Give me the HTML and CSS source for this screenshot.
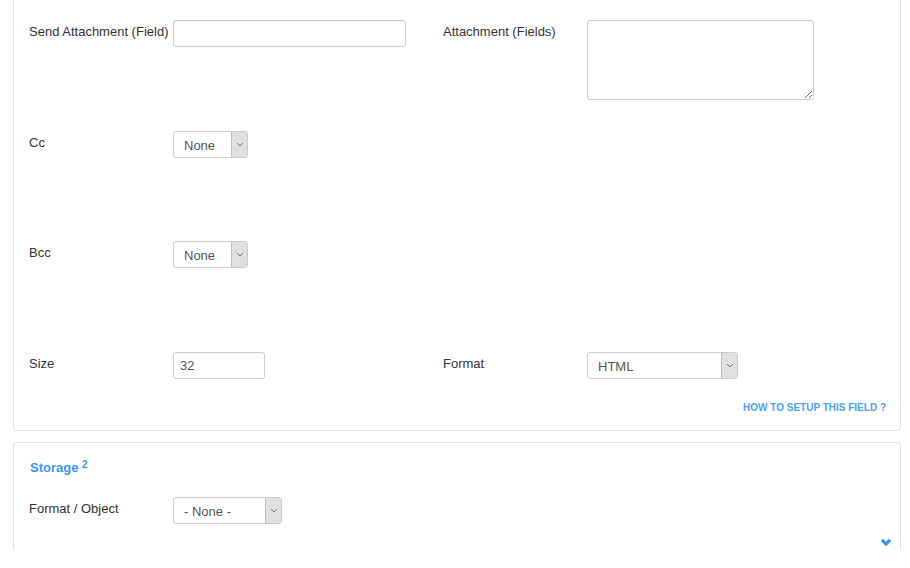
FILE: index.html
```html
<!DOCTYPE html>
<html lang="en">
<head>
    <meta charset="UTF-8">
    <meta name="viewport" content="width=device-width, initial-scale=1.0">
    <title>Field settings</title>
    <link rel="stylesheet" href="styles.css">
</head>
<body>
    <div class="page">
        <!-- options panel (top is scrolled out of view) -->
        <div class="panel panel-options">
            <div class="row">
                <div class="field">
                    <label class="label">Send Attachment (Field)</label>
                    <input class="input input-wide" type="text" value="">
                </div>
                <div class="field">
                    <label class="label">Attachment (Fields)</label>
                    <textarea class="textarea"></textarea>
                </div>
            </div>
            <div class="row">
                <div class="field">
                    <label class="label">Cc</label>
                    <div class="select select-small">
                        <span class="select-value">None</span>
                        <span class="select-arrow"><svg width="8" height="5" viewBox="0 0 8 5"><polyline points="1,1 4,4 7,1" fill="none" stroke="#777" stroke-width="1"/></svg></span>
                    </div>
                </div>
            </div>
            <div class="row">
                <div class="field">
                    <label class="label">Bcc</label>
                    <div class="select select-small">
                        <span class="select-value">None</span>
                        <span class="select-arrow"><svg width="8" height="5" viewBox="0 0 8 5"><polyline points="1,1 4,4 7,1" fill="none" stroke="#777" stroke-width="1"/></svg></span>
                    </div>
                </div>
            </div>
            <div class="row row-last">
                <div class="field">
                    <label class="label">Size</label>
                    <input class="input input-size" type="text" value="32">
                </div>
                <div class="field">
                    <label class="label">Format</label>
                    <div class="select select-format">
                        <span class="select-value">HTML</span>
                        <span class="select-arrow"><svg width="8" height="5" viewBox="0 0 8 5"><polyline points="1,1 4,4 7,1" fill="none" stroke="#777" stroke-width="1"/></svg></span>
                    </div>
                </div>
            </div>
            <div class="help-link"><a href="#">How to setup this field ?</a></div>
        </div>

        <!-- storage panel -->
        <div class="panel panel-storage">
            <h3 class="panel-title">Storage <sup>2</sup></h3>
            <div class="field">
                <label class="label">Format / Object</label>
                <div class="select select-object">
                    <span class="select-value">- None -</span>
                    <span class="select-arrow"><svg width="8" height="5" viewBox="0 0 8 5"><polyline points="1,1 4,4 7,1" fill="none" stroke="#777" stroke-width="1"/></svg></span>
                </div>
            </div>
            <div class="toggle">
                <svg width="12" height="9" viewBox="0 0 12 9"><polyline points="1.8,1.8 6,6 10.2,1.8" fill="none" stroke="#3d94f6" stroke-width="3.2" stroke-linejoin="miter"/></svg>
            </div>
        </div>
    </div>
</body>
</html>
```

FILE: styles.css
```css
body {
    margin: 0;
    background-color: #fff;
    font-family: "Liberation Sans", Arial, sans-serif;
    font-size: 13px;
    color: #333;
}

.page {
    padding: 0 9px 0 13px;
}

.panel {
    background-color: #fff;
    border: 1px solid #e1e1e1;
    border-radius: 4px;
    padding: 0 15px;
}

.panel-options {
    border-top: none;
    border-top-left-radius: 0;
    border-top-right-radius: 0;
    padding-top: 20px;
    padding-bottom: 15px;
    padding-right: 14px;
}

.row {
    display: grid;
    grid-template-columns: 414px 1fr;
    height: 111px;
}

.row:nth-child(2) {
    height: 110px;
}

.row-last {
    height: auto;
}

.field {
    display: flex;
    align-items: flex-start;
}

.label {
    width: 144px;
    flex-shrink: 0;
    line-height: 18px;
    padding-top: 3px;
}

.input {
    box-sizing: border-box;
    height: 27px;
    border: 1px solid #ccc;
    border-radius: 3px;
    padding: 0 6px;
    font-family: inherit;
    font-size: 13px;
    color: #555;
    box-shadow: inset 0 1px 1px rgba(0,0,0,0.04);
    margin: 0;
}

.input-wide {
    width: 233px;
}

.input-size {
    width: 92px;
}

.textarea {
    box-sizing: border-box;
    width: 227px;
    height: 80px;
    border: 1px solid #ccc;
    border-radius: 3px;
    margin: 0;
    font-family: inherit;
    font-size: 13px;
}

.select {
    box-sizing: border-box;
    display: flex;
    height: 27px;
    border: 1px solid #ccc;
    border-radius: 3px;
    background-color: #fff;
    color: #555;
}

.select-value {
    flex: 1;
    line-height: 25px;
    padding-left: 10px;
    padding-top: 1px;
}

.select-arrow {
    width: 15px;
    border-left: 1px solid #bdbdbd;
    background-color: #e0e0e0;
    border-radius: 0 2px 2px 0;
    display: flex;
    align-items: center;
    justify-content: center;
}

.select-small {
    width: 75px;
}

.select-format {
    width: 151px;
}

.select-object {
    width: 109px;
}

.help-link {
    text-align: right;
    margin-top: 21px;
    line-height: 14px;
}

.help-link a {
    color: #4da2f5;
    font-size: 10px;
    font-weight: bold;
    text-transform: uppercase;
    text-decoration: none;
}

.panel-storage {
    margin-top: 11px;
    border-bottom: none;
    border-bottom-left-radius: 0;
    border-bottom-right-radius: 0;
    height: 108px;
    box-sizing: border-box;
    padding-top: 16px;
}

.panel-title {
    margin: 0 0 20px 1px;
    font-size: 13px;
    font-weight: bold;
    color: #3d94f6;
    line-height: 18px;
}

.panel-title sup {
    font-size: 10px;
    vertical-align: top;
    position: relative;
    top: -3px;
}

.toggle {
    display: flex;
    justify-content: flex-end;
    margin-top: 14px;
    margin-right: -7px;
}
```
